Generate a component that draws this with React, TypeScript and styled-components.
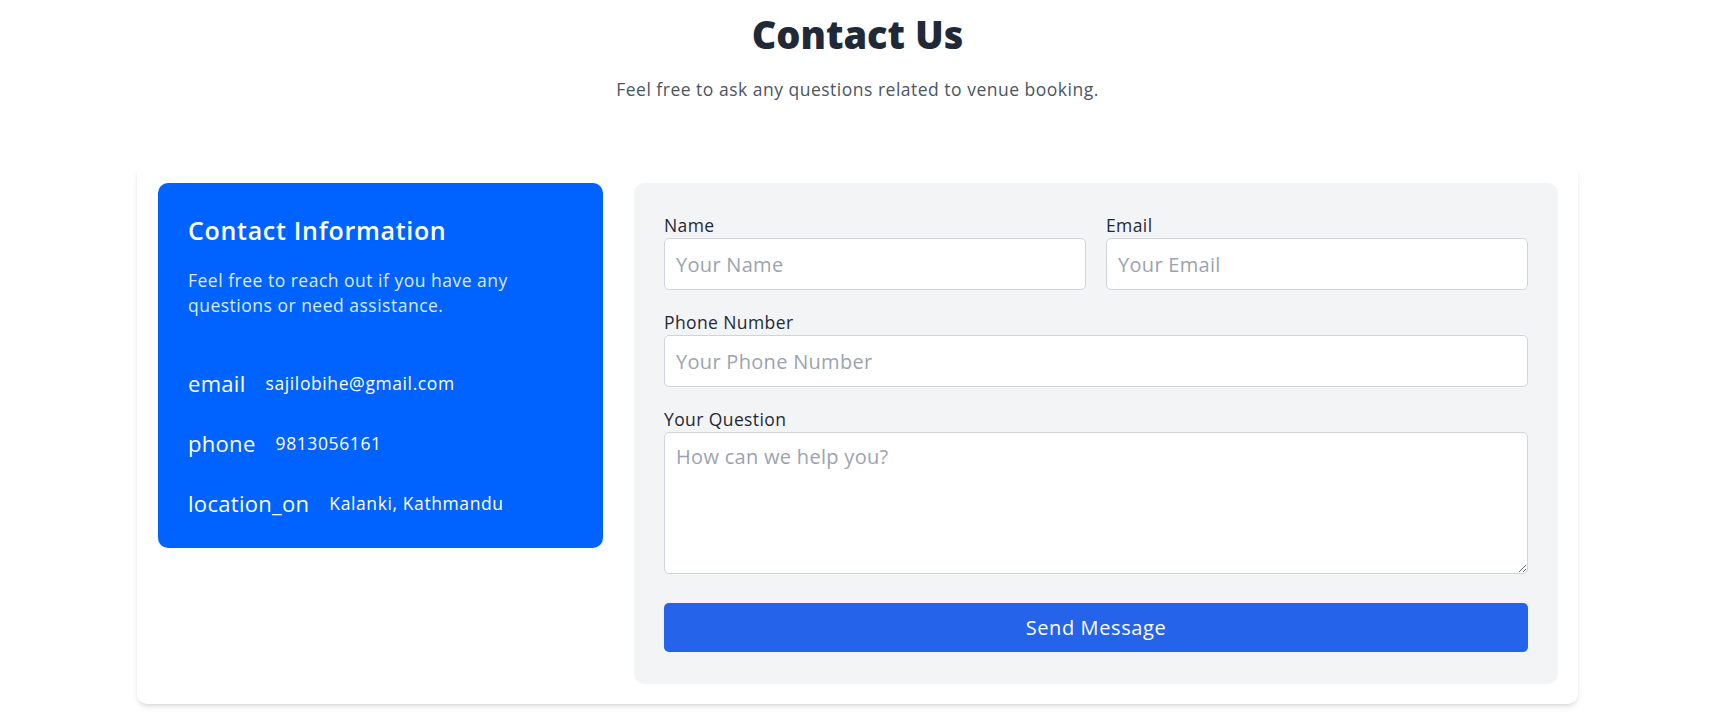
import React from 'react';
import styled, { createGlobalStyle } from 'styled-components';

const GlobalStyle = createGlobalStyle`
  * { box-sizing: border-box; }
  body {
    margin: 0;
    background: #ffffff;
    font-family: "Open Sans", "Liberation Sans", sans-serif;
  }
`;

const Page = styled.main`
  padding: 12px 16px 24px 0;
`;

const Header = styled.header`
  text-align: center;
  margin-bottom: 62px;
`;

const Title = styled.h1`
  margin: 0;
  font-size: 38px;
  line-height: 45px;
  font-weight: 800;
  color: #1f2937;
`;

const Subtitle = styled.p`
  margin: 20px 0 0;
  font-size: 17.5px;
  line-height: 25px;
  letter-spacing: 0.5px;
  color: #4b5563;
`;

const Card = styled.section`
  width: 1441px;
  margin: 0 auto;
  background: #ffffff;
  border-radius: 10px;
  box-shadow: 0 4px 6px -1px rgba(0, 0, 0, 0.1), 0 2px 4px -2px rgba(0, 0, 0, 0.1);
  padding: 19px 20px 20px 21px;
  display: grid;
  grid-template-columns: 445px 1fr;
  gap: 31px;
  align-items: start;
`;

const InfoPanel = styled.div`
  background: #0062ff;
  border-radius: 10px;
  padding: 30px;
  color: #ffffff;
`;

const InfoTitle = styled.h2`
  margin: 0 0 20px;
  font-size: 25px;
  line-height: 35px;
  font-weight: 600;
  letter-spacing: 0.7px;
`;

const InfoText = styled.p`
  margin: 0 0 50px;
  font-size: 17.5px;
  line-height: 25px;
  letter-spacing: 0.5px;
  color: #dbeafe;
`;

const ContactList = styled.ul`
  list-style: none;
  margin: 0;
  padding: 0;
  display: flex;
  flex-direction: column;
  gap: 30px;
`;

const ContactRow = styled.li`
  display: flex;
  align-items: center;
  gap: 20px;
  height: 30px;
`;

const RowIcon = styled.span`
  font-size: 22px;
  line-height: 30px;
  letter-spacing: 0.3px;
`;

const RowValue = styled.span`
  font-size: 17.5px;
  line-height: 25px;
  letter-spacing: 0.6px;
`;

const FormPanel = styled.form`
  background: #f3f4f6;
  border-radius: 10px;
  padding: 30px 30px 32px;
  display: flex;
  flex-direction: column;
  gap: 20px;
`;

const FieldRow = styled.div`
  display: grid;
  grid-template-columns: 1fr 1fr;
  gap: 20px;
`;

const Field = styled.div`
  display: flex;
  flex-direction: column;
`;

const Label = styled.label`
  font-size: 17.5px;
  line-height: 25px;
  font-weight: 500;
  letter-spacing: 0.4px;
  color: #1f2937;
`;

const fieldBase = `
  width: 100%;
  border: 1px solid #d1d5db;
  border-radius: 5px;
  background: #ffffff;
  padding: 0 11px;
  font-family: "Open Sans", "Liberation Sans", sans-serif;
  font-size: 20px;
  letter-spacing: 0.3px;
  color: #1f2937;
  outline: none;
  &::placeholder { color: #9ca3af; }
`;

const Input = styled.input`
  ${fieldBase}
  height: 52px;
`;

const TextArea = styled.textarea`
  ${fieldBase}
  height: 142px;
  padding: 10px 11px;
  line-height: 27px;
  resize: vertical;
  display: block;
`;

const SendButton = styled.button`
  margin-top: 9px;
  height: 49px;
  border: none;
  border-radius: 5px;
  background: #2563eb;
  color: #ffffff;
  font-family: "Open Sans", "Liberation Sans", sans-serif;
  font-size: 20px;
  letter-spacing: 0.6px;
  cursor: pointer;
`;

const contacts = [
  { icon: 'email', value: 'sajilobihe@gmail.com' },
  { icon: 'phone', value: '9813056161' },
  { icon: 'location_on', value: 'Kalanki, Kathmandu' },
];

export default function App() {
  return (
    <Page>
      <GlobalStyle />
      <Header>
        <Title>Contact Us</Title>
        <Subtitle>Feel free to ask any questions related to venue booking.</Subtitle>
      </Header>
      <Card>
        <InfoPanel>
          <InfoTitle>Contact Information</InfoTitle>
          <InfoText>Feel free to reach out if you have any questions or need assistance.</InfoText>
          <ContactList>
            {contacts.map((c) => (
              <ContactRow key={c.icon}>
                <RowIcon>{c.icon}</RowIcon>
                <RowValue>{c.value}</RowValue>
              </ContactRow>
            ))}
          </ContactList>
        </InfoPanel>
        <FormPanel onSubmit={(e) => e.preventDefault()}>
          <FieldRow>
            <Field>
              <Label htmlFor="name">Name</Label>
              <Input id="name" placeholder="Your Name" />
            </Field>
            <Field>
              <Label htmlFor="email">Email</Label>
              <Input id="email" type="email" placeholder="Your Email" />
            </Field>
          </FieldRow>
          <Field>
            <Label htmlFor="phone">Phone Number</Label>
            <Input id="phone" placeholder="Your Phone Number" />
          </Field>
          <Field>
            <Label htmlFor="question">Your Question</Label>
            <TextArea id="question" placeholder="How can we help you?" />
          </Field>
          <SendButton type="submit">Send Message</SendButton>
        </FormPanel>
      </Card>
    </Page>
  );
}
